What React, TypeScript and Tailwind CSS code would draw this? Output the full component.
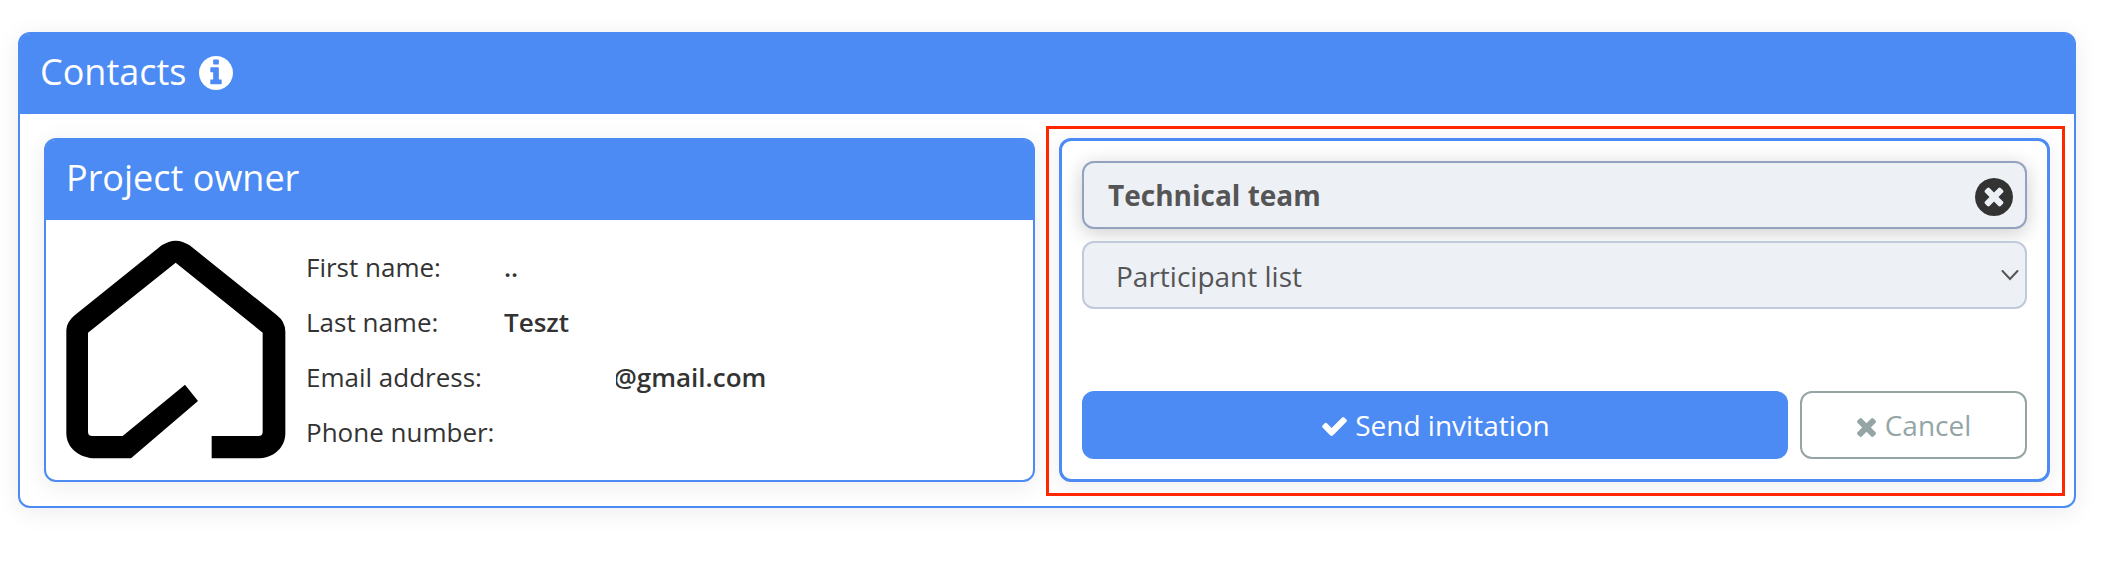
import React from "react";

const DISC =
  "M1664 896q0 209-103 385.5t-279.5 279.5-385.5 103-385.5-103-279.5-279.5-103-385.5 103-385.5 279.5-279.5 385.5-103 385.5 103 279.5 279.5 103 385.5z";

function InfoIcon() {
  return (
    <svg className="mt-[2px] h-[34px] w-[34px] fill-current" viewBox="128 128 1536 1536">
      <path
        fillRule="evenodd"
        d={
          "M1152 1376v-160q0-14-9-23t-23-9h-96v-512q0-14-9-23t-23-9h-320q-14 0-23 9t-9 23v160q0 14 9 23t23 9h96v320h-96q-14 0-23 9t-9 23v160q0 14 9 23t23 9h448q14 0 23-9t9-23zM1024 480v-160q0-14-9-23t-23-9h-192q-14 0-23 9t-9 23v160q0 14 9 23t23 9h192q14 0 23-9t9-23z" +
          DISC
        }
      />
    </svg>
  );
}

function TimesCircleIcon() {
  return (
    <svg className="h-[38px] w-[38px] fill-current" viewBox="128 128 1536 1536">
      <path
        fillRule="evenodd"
        d={
          "M1277 1122q0-26-19-45l-181-181 181-181q19-19 19-45 0-27-19-46l-90-90q-19-19-46-19-26 0-45 19l-181 181-181-181q-19-19-45-19-27 0-46 19l-90 90q-19 19-19 46 0 26 19 45l181 181-181 181q-19 19-19 45 0 27 19 46l90 90q19 19 46 19 26 0 45-19l181-181 181 181q19 19 45 19 27 0 46-19l90-90q19-19 19-46z" +
          DISC
        }
      />
    </svg>
  );
}

function CheckIcon() {
  return (
    <svg className="mt-[2px] h-[19px] w-[25px] fill-current" viewBox="121 334 1550 1188">
      <path d="M1671 566q0 40-28 68l-724 724-136 136q-28 28-68 28t-68-28l-136-136-362-362q-28-28-28-68t28-68l136-136q28-28 68-28t68 28l294 295 656-657q28-28 68-28t68 28l136 136q28 28 28 68z" />
    </svg>
  );
}

function TimesIcon() {
  return (
    <svg className="mt-1 h-[19px] w-[19px] fill-current" viewBox="302 366 1188 1188">
      <path d="M1490 1322q0 40-28 68l-136 136q-28 28-68 28t-68-28l-294-294-294 294q-28 28-68 28t-68-28l-136-136q-28-28-28-68t28-68l294-294-294-294q-28-28-28-68t28-68l136-136q28-28 68-28t68 28l294 294 294-294q28-28 68-28t68 28l136 136q28 28 28 68t-28 68l-294 294 294 294q28 28 28 68z" />
    </svg>
  );
}

function HouseLogo() {
  return (
    <svg className="h-[220px] w-[220px] shrink-0" viewBox="78 60 660 660">
      <path d="M515 648H655Q668 648 668 635V338L407 128L144 338V635Q144 648 157 648H248L435 494L474 543L273 715H158C112 711 79 680 79 640V330Q80 305 105 285L365 76Q407 48 449 76L710 285Q736 305 736 335V640C736 680 705 712 660 715H515Z" />
    </svg>
  );
}

function Row({ label, children }: { label: string; children?: React.ReactNode }) {
  return (
    <div className="flex h-[55px] items-center text-[26px] leading-[55px] whitespace-nowrap">
      <span className="w-[198px] shrink-0">{label}</span>
      <span className="font-semibold">{children}</span>
    </div>
  );
}

export default function App() {
  return (
    <div className="h-[566px] w-[2120px] overflow-hidden bg-white pt-8 pl-[18px] font-['Open_Sans',sans-serif] text-[#333]">
      <section className="flex h-[476px] w-[2058px] flex-col rounded-xl border-2 border-[#4c8bf3] bg-white shadow-[0_4px_24px_rgba(0,0,0,0.08)]">
        <header className="flex h-20 shrink-0 items-center gap-[13px] rounded-t-[9px] bg-[#4c8bf3] pb-1 pl-5 text-white">
          <h1 className="text-[36px] leading-[48px]">Contacts</h1>
          <InfoIcon />
        </header>
        <div className="flex gap-6 px-6 pt-6">
          <section className="h-[344px] w-[991px] rounded-xl border-2 border-[#4c8bf3] bg-white shadow-[0_4px_24px_rgba(0,0,0,0.08)]">
            <header className="flex h-20 items-center rounded-t-[9px] bg-[#4c8bf3] pb-1 pl-5 text-white">
              <h2 className="text-[36px] leading-[48px]">Project owner</h2>
            </header>
            <div className="flex gap-5 pt-5 pl-5">
              <HouseLogo />
              <div>
                <Row label="First name:">..</Row>
                <Row label="Last name:">Teszt</Row>
                <Row label="Email address:">
                  <span className="ml-[112px] block overflow-hidden">
                    <span className="-ml-[2.5px] block">@gmail.com</span>
                  </span>
                </Row>
                <Row label="Phone number:" />
              </div>
            </div>
          </section>
          <section className="relative flex h-[344px] w-[991px] flex-col rounded-xl border-[3px] border-[#4c8bf3] bg-white px-5 pt-5 text-[28px] shadow-[0_4px_24px_rgba(0,0,0,0.08)]">
            <div className="flex h-[68px] items-center justify-between rounded-xl border-2 border-[#93a2bf] bg-[#edf0f5] pr-3 pl-6 font-bold text-[#555] shadow-[0_4px_20px_rgba(0,0,0,0.2)]">
              <span className="leading-[38px]">Technical team</span>
              <span className="pt-1 text-[#333]">
                <TimesCircleIcon />
              </span>
            </div>
            <div className="mt-3 flex h-[68px] items-center justify-between rounded-xl border-2 border-[#c0cada] bg-[#edf0f5] pr-[5px] pl-8 text-[#555]">
              <span className="pt-[2px] leading-[38px]">Participant list</span>
              <svg className="h-3 w-5" viewBox="0 0 20 12" fill="none" stroke="currentColor" strokeWidth="2">
                <path d="M2.5 2L10 10L17.5 2" strokeLinecap="round" />
              </svg>
            </div>
            <div className="mt-[82px] flex gap-3">
              <button className="flex h-[68px] w-[706px] items-center justify-center gap-2 rounded-xl bg-[#4c8bf3] pl-[2px] text-white">
                <CheckIcon />
                <span>Send invitation</span>
              </button>
              <button className="flex h-[68px] w-[227px] items-center justify-center gap-[9px] rounded-xl border-2 border-[#95a5a6] pl-px text-[#95a5a6]">
                <TimesIcon />
                <span>Cancel</span>
              </button>
            </div>
            <div className="pointer-events-none absolute -top-[15px] -right-[18px] -bottom-[17px] -left-[16px] border-[3px] border-[#ff2600]" />
          </section>
        </div>
      </section>
    </div>
  );
}
